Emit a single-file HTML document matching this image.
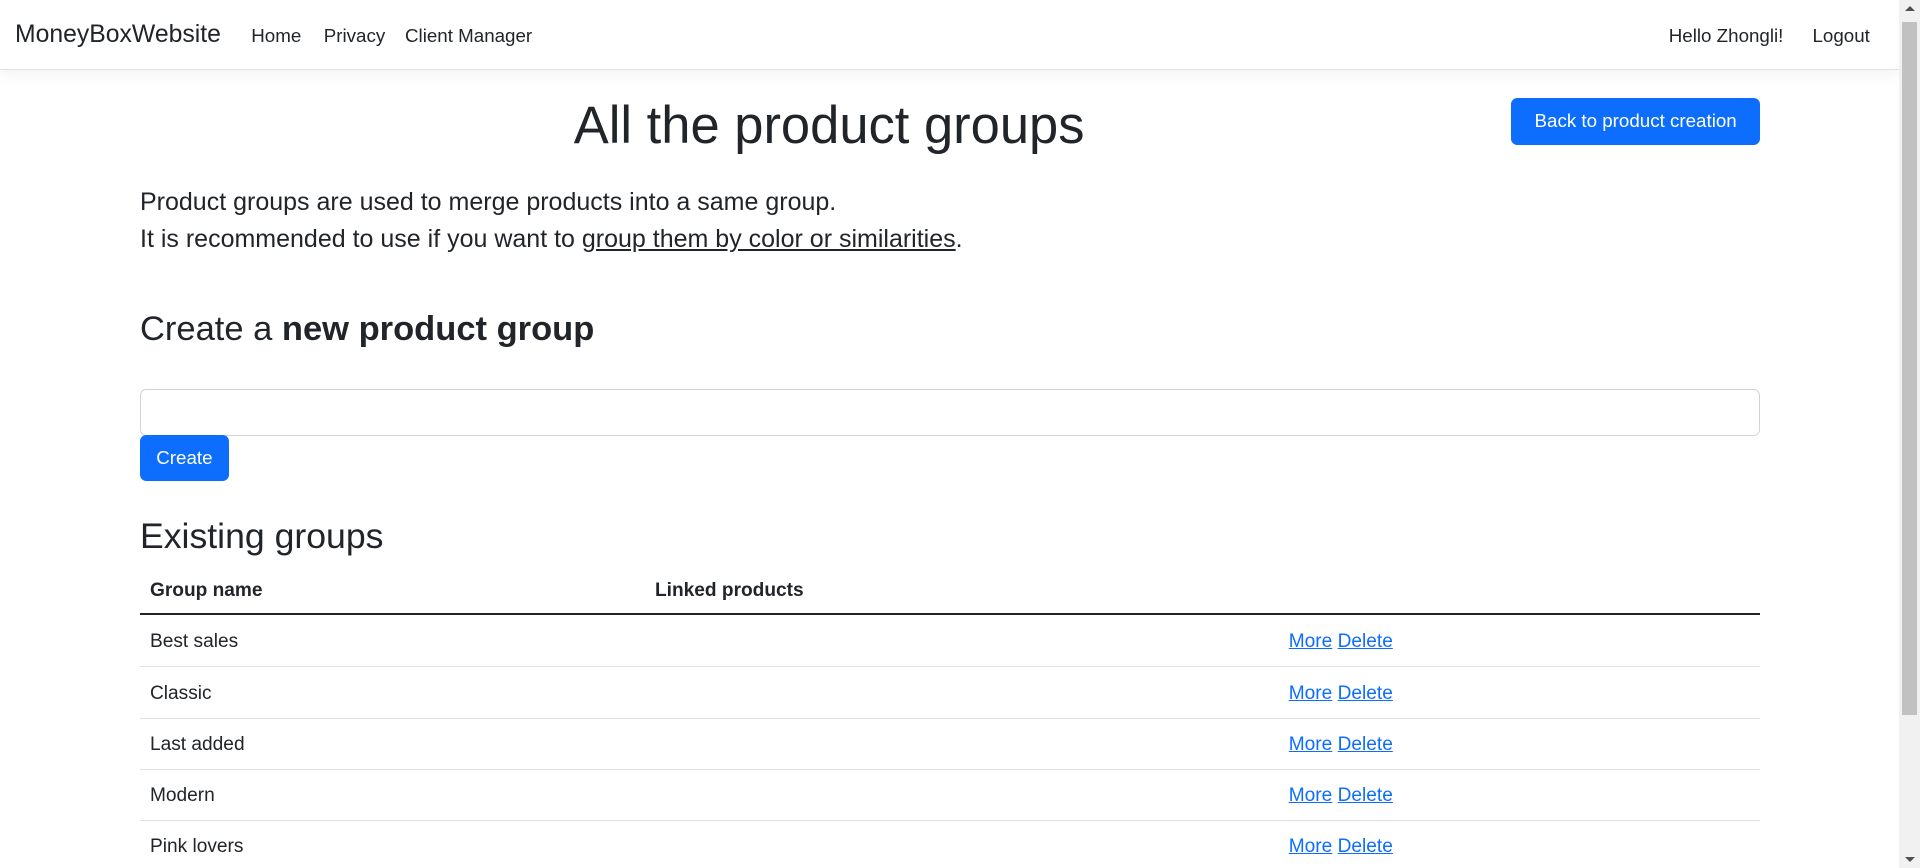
<!DOCTYPE html>
<html><head><meta charset="utf-8"><style>
html,body{margin:0;padding:0;background:#fff;overflow:hidden;width:1920px;height:868px}
#w{zoom:1.25;width:1519.2px;height:694px;position:relative;font-family:"Liberation Sans",sans-serif;color:#212529;font-size:16px}
.nav{position:absolute;left:0;top:0;width:100%;height:55px;border-bottom:1px solid #dee2e6;box-shadow:0 .25rem .75rem rgba(0,0,0,.05)}
.brand{position:absolute;left:12px;top:17px;font-size:19.8px}
.nl{position:absolute;top:20px;font-size:15px}
a{color:#0d6efd}
.abs{position:absolute;white-space:nowrap}
.btn{position:absolute;background:#0d6efd;color:#fff;border-radius:5px;font-size:15px;display:flex;align-items:center;justify-content:center}
.row{position:absolute;left:112px;width:1296px;height:41px;border-bottom:1px solid #dee2e6;font-size:15.3px}
.row span{position:absolute;top:13px}
#sb{position:fixed;right:0;top:0;width:21px;height:868px;background:#f1f1f1}
#th{position:absolute;left:3px;width:15px;top:22px;height:693px;background:#c1c1c1}
</style></head><body>
<div id="w">
<div class="nav">
<div class="brand">MoneyBoxWebsite</div>
<div class="nl" style="left:201px">Home</div>
<div class="nl" style="left:259px">Privacy</div>
<div class="nl" style="left:324px">Client Manager</div>
<div class="nl" style="left:1335px">Hello Zhongli!</div>
<div class="nl" style="left:1450px">Logout</div>
</div>
<div class="abs" style="left:459px;top:76px;width:400px;text-align:center;font-size:42px;font-weight:500">All the product groups</div>
<div class="btn" style="left:1209px;top:78px;width:199px;height:38px">Back to product creation</div>
<div class="abs" style="left:112px;top:147px;font-size:20px;line-height:30px">Product groups are used to merge products into a same group.<br>It is recommended to use if you want to <u>group them by color or similarities</u>.</div>
<div class="abs" style="left:112px;top:248px;font-size:27.6px;font-weight:500">Create a <b>new product group</b></div>
<div class="abs" style="left:112px;top:311px;width:1294px;height:36px;border:1px solid #ced4da;border-radius:5px"></div>
<div class="btn" style="left:112px;top:348px;width:71px;height:37px">Create</div>
<div class="abs" style="left:112px;top:413px;font-size:28.5px;font-weight:500">Existing groups</div>
<div class="row" style="top:451px;border-bottom:2px solid #212529;height:39px;font-weight:bold"><span style="left:8px">Group name</span><span style="left:412px">Linked products</span></div>
<div class="row" style="top:492px"><span style="left:8px">Best sales</span><span style="left:919px"><a href="#">More</a> <a href="#">Delete</a></span></div>
<div class="row" style="top:533px"><span style="left:8px">Classic</span><span style="left:919px"><a href="#">More</a> <a href="#">Delete</a></span></div>
<div class="row" style="top:574px"><span style="left:8px">Last added</span><span style="left:919px"><a href="#">More</a> <a href="#">Delete</a></span></div>
<div class="row" style="top:615px"><span style="left:8px">Modern</span><span style="left:919px"><a href="#">More</a> <a href="#">Delete</a></span></div>
<div class="row" style="top:656px"><span style="left:8px">Pink lovers</span><span style="left:919px"><a href="#">More</a> <a href="#">Delete</a></span></div>
</div>
<div id="sb"><div id="th"></div>
<div style="position:absolute;left:6px;top:6px;width:0;height:0;border-left:5px solid transparent;border-right:5px solid transparent;border-bottom:5px solid #505050"></div>
<div style="position:absolute;left:6px;bottom:6px;width:0;height:0;border-left:5px solid transparent;border-right:5px solid transparent;border-top:5px solid #505050"></div>
</div>
</body></html>
